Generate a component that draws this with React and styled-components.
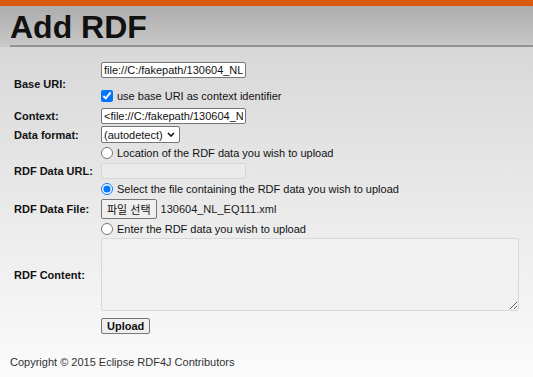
import styled, { createGlobalStyle } from "styled-components";

const GlobalStyle = createGlobalStyle`
  html, body {
    margin: 0;
    padding: 0;
  }
  body {
    font-family: "Liberation Sans", Arial, sans-serif;
    font-size: 11px;
    color: #1a1a1a;
  }
`;

const Page = styled.div`
  min-height: 100vh;
  display: flex;
  flex-direction: column;
  background: linear-gradient(#d2d2d2 0%, #e6e6e6 45%, #fbfbfb 100%);
`;

const TopBar = styled.div`
  height: 6px;
  background: #d95a0a;
`;

const HeaderBand = styled.header`
  padding-left: 10px;
  background: linear-gradient(#acacac, #c9c9c9);
`;

const Title = styled.h1`
  margin: 0;
  padding-top: 3px;
  font-size: 32px;
  line-height: 36px;
  font-weight: bold;
  color: #111;
  border-bottom: 2px solid #939393;
`;

const Form = styled.form`
  display: grid;
  grid-template-columns: 87px 1fr;
  row-gap: 2px;
  padding: 15px 0 0 14px;
`;

const Label = styled.label`
  align-self: center;
  font-weight: bold;
  color: #111;
`;

const Cell = styled.div`
  display: flex;
  flex-direction: column;
  align-items: flex-start;
  padding-bottom: ${(p) => p.$pad || 0}px;
`;

const TextInput = styled.input`
  box-sizing: border-box;
  width: 145px;
  height: 16px;
  margin: 0;
  padding: 0 2px;
  font: 11px "Liberation Sans", Arial, sans-serif;
  color: #111;
  background: ${(p) => (p.disabled ? "#ebebeb" : "#fff")};
  border: 1px solid ${(p) => (p.disabled ? "#d6d6d6" : "#767676")};
  border-radius: 2px;
`;

const OptionLine = styled.label`
  display: flex;
  align-items: center;
  gap: 4px;
  height: 16px;
  margin-top: ${(p) => p.$top || 0}px;
  color: #111;

  input {
    margin: 0;
    width: 12px;
    height: 12px;
    accent-color: #0075ff;
  }
`;

const SelectWrap = styled.span`
  position: relative;
  display: inline-block;
  width: 79px;
  height: 17px;

  svg {
    position: absolute;
    right: 5px;
    top: 6px;
    pointer-events: none;
  }
`;

const Select = styled.select`
  appearance: none;
  box-sizing: border-box;
  width: 100%;
  height: 100%;
  margin: 0;
  padding: 0 0 0 2px;
  font: 11px "Liberation Sans", Arial, sans-serif;
  color: #111;
  background: #fff;
  border: 1px solid #767676;
  border-radius: 2px;
`;

const FileRow = styled.div`
  display: flex;
  align-items: center;
  gap: 4px;
  height: 20px;
`;

const Button = styled.button`
  box-sizing: border-box;
  height: ${(p) => p.$h || 20}px;
  margin: 0;
  padding: 0 5px;
  font-family: "Liberation Sans", Arial, "Noto Sans CJK KR", sans-serif;
  font-size: 11px;
  font-weight: ${(p) => (p.$bold ? "bold" : "normal")};
  color: #111;
  background: #efefef;
  border: 1px solid #767676;
  border-radius: 2px;
`;

const Content = styled.textarea`
  box-sizing: border-box;
  width: 418px;
  height: 73px;
  margin: -1px 0 0;
  background: #f1f1f1;
  border: 1px solid #d8d8d8;
  border-radius: 2px;
`;

const UploadCell = styled.div`
  grid-column: 2;
  margin-top: 5px;
`;

const Footer = styled.footer`
  margin-top: 22px;
  padding-left: 10px;
  line-height: 13px;
  color: #333;
`;

const Chevron = () => (
  <svg width="8" height="5" viewBox="0 0 8 5">
    <path d="M1 1 L4 4 L7 1" fill="none" stroke="#111" strokeWidth="1.6" />
  </svg>
);

export default function App() {
  return (
    <Page>
      <GlobalStyle />
      <TopBar />
      <HeaderBand>
        <Title>Add RDF</Title>
      </HeaderBand>
      <Form onSubmit={(e) => e.preventDefault()}>
        <Label>Base URI:</Label>
        <Cell $pad={2}>
          <TextInput readOnly defaultValue="file://C:/fakepath/130604_NL_EQ111.xml" />
          <OptionLine $top={10}>
            <input type="checkbox" defaultChecked />
            use base URI as context identifier
          </OptionLine>
        </Cell>

        <Label>Context:</Label>
        <Cell>
          <TextInput readOnly defaultValue="<file://C:/fakepath/130604_NL_EQ111.xml>" />
        </Cell>

        <Label>Data format:</Label>
        <Cell>
          <SelectWrap>
            <Select defaultValue="auto">
              <option value="auto">(autodetect)</option>
            </Select>
            <Chevron />
          </SelectWrap>
        </Cell>

        <span />
        <OptionLine>
          <input type="radio" name="source" />
          Location of the RDF data you wish to upload
        </OptionLine>

        <Label>RDF Data URL:</Label>
        <Cell>
          <TextInput disabled />
        </Cell>

        <span />
        <OptionLine>
          <input type="radio" name="source" defaultChecked />
          Select the file containing the RDF data you wish to upload
        </OptionLine>

        <Label>RDF Data File:</Label>
        <FileRow>
          <Button type="button">파일 선택</Button>
          <span>130604_NL_EQ111.xml</span>
        </FileRow>

        <span />
        <OptionLine>
          <input type="radio" name="source" />
          Enter the RDF data you wish to upload
        </OptionLine>

        <Label>RDF Content:</Label>
        <Cell>
          <Content readOnly />
        </Cell>

        <UploadCell>
          <Button type="submit" $h={16} $bold>
            Upload
          </Button>
        </UploadCell>
      </Form>
      <Footer>Copyright © 2015 Eclipse RDF4J Contributors</Footer>
    </Page>
  );
}
